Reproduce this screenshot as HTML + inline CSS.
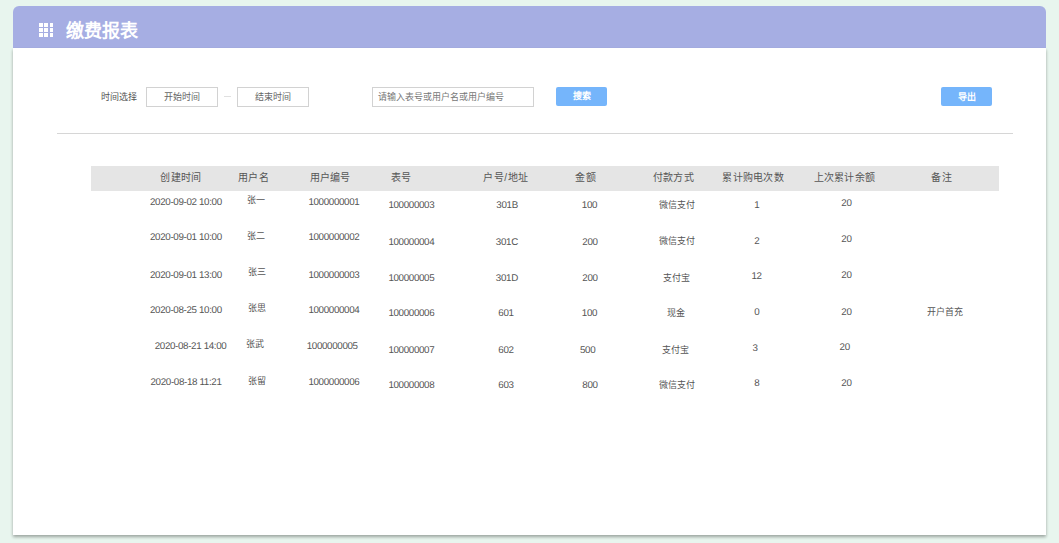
<!DOCTYPE html><html lang="zh-CN"><head><meta charset="utf-8"><style>
html,body{margin:0;padding:0;}
body{width:1059px;height:543px;position:relative;overflow:hidden;background:#e8f5ee;font-family:"Liberation Sans", sans-serif;}
.t{position:absolute;white-space:nowrap;line-height:1;}
.hd{position:absolute;left:13px;top:6px;width:1033px;height:42px;background:#a6aee3;border-radius:6px 6px 0 0;}
.bd{position:absolute;left:13px;top:48px;width:1033px;height:487px;background:#fff;box-shadow:0 2px 3px rgba(0,0,0,0.33);}
.grid{position:absolute;left:0;top:0;}
.grid i{position:absolute;width:3.6px;height:3.6px;background:#fff;}
.ib{position:absolute;box-sizing:border-box;border:1px solid #d2d2d2;background:#fff;height:20px;top:87px;}
.btn{position:absolute;top:87px;height:19px;background:#75b5fb;border-radius:2px;}
.dash{position:absolute;left:224px;top:96px;width:7px;height:1px;background:#e0e0e0;}
.line{position:absolute;left:57px;top:133px;width:956px;height:1px;background:#d6d6d6;}
.th{position:absolute;left:91px;top:166px;width:908px;height:25px;background:#e5e5e5;}
</style></head><body><div class="hd"></div><div class="bd"></div>
<div class="grid"><i style="left:39px;top:23px"></i><i style="left:44.2px;top:23px"></i><i style="left:49.5px;top:23px"></i><i style="left:39px;top:28.1px"></i><i style="left:44.2px;top:28.1px"></i><i style="left:49.5px;top:28.1px"></i><i style="left:39px;top:33.2px"></i><i style="left:44.2px;top:33.2px"></i><i style="left:49.5px;top:33.2px"></i></div>
<div class="ib" style="left:146px;width:72px"></div>
<div class="dash"></div>
<div class="ib" style="left:237px;width:72px"></div>
<div class="ib" style="left:372px;width:162px"></div>
<div class="btn" style="left:556px;width:51px"></div>
<div class="btn" style="left:941px;width:51px"></div>
<div class="line"></div>
<div class="th"></div>

<span class="t" style="left:65.50px;top:22.30px;font-size:18px;font-weight:700;color:#ffffff;">缴费报表</span>
<span class="t" style="left:101.12px;top:92.85px;font-size:9px;font-weight:400;color:#555;">时间选择</span>
<span class="t" style="left:164.45px;top:92.85px;font-size:9px;font-weight:400;color:#666;">开始时间</span>
<span class="t" style="left:255.20px;top:92.85px;font-size:9px;font-weight:400;color:#666;">结束时间</span>
<span class="t" style="left:378.20px;top:92.60px;font-size:9px;font-weight:400;color:#777;">请输入表号或用户名或用户编号</span>
<span class="t" style="left:573.00px;top:91.75px;font-size:9px;font-weight:700;color:#ffffff;">搜索</span>
<span class="t" style="left:958.25px;top:92.50px;font-size:9px;font-weight:700;color:#ffffff;">导出</span>
<span class="t" style="left:160.45px;top:173.10px;font-size:10px;font-weight:400;color:#555555;letter-spacing:0.25px;">创建时间</span>
<span class="t" style="left:238.00px;top:173.10px;font-size:10px;font-weight:400;color:#555555;letter-spacing:0.25px;">用户名</span>
<span class="t" style="left:309.55px;top:173.10px;font-size:10px;font-weight:400;color:#555555;letter-spacing:0.25px;">用户编号</span>
<span class="t" style="left:390.50px;top:173.10px;font-size:10px;font-weight:400;color:#555555;letter-spacing:0.25px;">表号</span>
<span class="t" style="left:483.00px;top:173.10px;font-size:10px;font-weight:400;color:#555555;letter-spacing:0.6px;">户号/地址</span>
<span class="t" style="left:575.45px;top:173.10px;font-size:10px;font-weight:400;color:#555555;letter-spacing:0.25px;">金额</span>
<span class="t" style="left:652.80px;top:173.10px;font-size:10px;font-weight:400;color:#555555;letter-spacing:0.25px;">付款方式</span>
<span class="t" style="left:722.25px;top:173.10px;font-size:10px;font-weight:400;color:#555555;letter-spacing:0.25px;">累计购电次数</span>
<span class="t" style="left:813.70px;top:173.10px;font-size:10px;font-weight:400;color:#555555;letter-spacing:0.25px;">上次累计余额</span>
<span class="t" style="left:931.45px;top:173.10px;font-size:10px;font-weight:400;color:#555555;letter-spacing:0.25px;">备注</span>
<span class="t" style="left:150.00px;top:197.90px;font-size:9.8px;font-weight:400;color:#555555;letter-spacing:-0.35px;text-rendering:geometricPrecision;">2020-09-02 10:00</span>
<span class="t" style="left:247.20px;top:196.45px;font-size:9px;font-weight:400;color:#555555;">张一</span>
<span class="t" style="left:308.40px;top:197.90px;font-size:9.8px;font-weight:400;color:#555555;letter-spacing:-0.35px;text-rendering:geometricPrecision;">1000000001</span>
<span class="t" style="left:388.40px;top:201.30px;font-size:9.8px;font-weight:400;color:#555555;letter-spacing:-0.35px;text-rendering:geometricPrecision;">100000003</span>
<span class="t" style="left:496.35px;top:201.30px;font-size:9.8px;font-weight:400;color:#555555;letter-spacing:-0.35px;text-rendering:geometricPrecision;">301B</span>
<span class="t" style="left:581.80px;top:201.30px;font-size:9.8px;font-weight:400;color:#555555;letter-spacing:-0.35px;text-rendering:geometricPrecision;">100</span>
<span class="t" style="left:658.90px;top:200.85px;font-size:9px;font-weight:400;color:#555555;">微信支付</span>
<span class="t" style="left:754.20px;top:200.75px;font-size:9.8px;font-weight:400;color:#555555;letter-spacing:-0.35px;text-rendering:geometricPrecision;">1</span>
<span class="t" style="left:841.30px;top:198.95px;font-size:9.8px;font-weight:400;color:#555555;letter-spacing:-0.35px;text-rendering:geometricPrecision;">20</span>
<span class="t" style="left:150.00px;top:232.90px;font-size:9.8px;font-weight:400;color:#555555;letter-spacing:-0.35px;text-rendering:geometricPrecision;">2020-09-01 10:00</span>
<span class="t" style="left:247.20px;top:231.85px;font-size:9px;font-weight:400;color:#555555;">张二</span>
<span class="t" style="left:308.40px;top:232.90px;font-size:9.8px;font-weight:400;color:#555555;letter-spacing:-0.35px;text-rendering:geometricPrecision;">1000000002</span>
<span class="t" style="left:388.40px;top:237.90px;font-size:9.8px;font-weight:400;color:#555555;letter-spacing:-0.35px;text-rendering:geometricPrecision;">100000004</span>
<span class="t" style="left:495.85px;top:237.90px;font-size:9.8px;font-weight:400;color:#555555;letter-spacing:-0.35px;text-rendering:geometricPrecision;">301C</span>
<span class="t" style="left:582.30px;top:237.90px;font-size:9.8px;font-weight:400;color:#555555;letter-spacing:-0.35px;text-rendering:geometricPrecision;">200</span>
<span class="t" style="left:658.90px;top:236.85px;font-size:9px;font-weight:400;color:#555555;">微信支付</span>
<span class="t" style="left:754.20px;top:236.95px;font-size:9.8px;font-weight:400;color:#555555;letter-spacing:-0.35px;text-rendering:geometricPrecision;">2</span>
<span class="t" style="left:841.30px;top:234.95px;font-size:9.8px;font-weight:400;color:#555555;letter-spacing:-0.35px;text-rendering:geometricPrecision;">20</span>
<span class="t" style="left:150.00px;top:270.50px;font-size:9.8px;font-weight:400;color:#555555;letter-spacing:-0.35px;text-rendering:geometricPrecision;">2020-09-01 13:00</span>
<span class="t" style="left:247.70px;top:268.45px;font-size:9px;font-weight:400;color:#555555;">张三</span>
<span class="t" style="left:308.40px;top:270.50px;font-size:9.8px;font-weight:400;color:#555555;letter-spacing:-0.35px;text-rendering:geometricPrecision;">1000000003</span>
<span class="t" style="left:388.40px;top:274.30px;font-size:9.8px;font-weight:400;color:#555555;letter-spacing:-0.35px;text-rendering:geometricPrecision;">100000005</span>
<span class="t" style="left:495.85px;top:274.30px;font-size:9.8px;font-weight:400;color:#555555;letter-spacing:-0.35px;text-rendering:geometricPrecision;">301D</span>
<span class="t" style="left:582.30px;top:274.30px;font-size:9.8px;font-weight:400;color:#555555;letter-spacing:-0.35px;text-rendering:geometricPrecision;">200</span>
<span class="t" style="left:663.40px;top:274.05px;font-size:9px;font-weight:400;color:#555555;">支付宝</span>
<span class="t" style="left:751.40px;top:271.95px;font-size:9.8px;font-weight:400;color:#555555;letter-spacing:-0.35px;text-rendering:geometricPrecision;">12</span>
<span class="t" style="left:841.30px;top:270.55px;font-size:9.8px;font-weight:400;color:#555555;letter-spacing:-0.35px;text-rendering:geometricPrecision;">20</span>
<span class="t" style="left:150.00px;top:305.70px;font-size:9.8px;font-weight:400;color:#555555;letter-spacing:-0.35px;text-rendering:geometricPrecision;">2020-08-25 10:00</span>
<span class="t" style="left:247.70px;top:304.25px;font-size:9px;font-weight:400;color:#555555;">张思</span>
<span class="t" style="left:308.40px;top:305.70px;font-size:9.8px;font-weight:400;color:#555555;letter-spacing:-0.35px;text-rendering:geometricPrecision;">1000000004</span>
<span class="t" style="left:388.40px;top:309.30px;font-size:9.8px;font-weight:400;color:#555555;letter-spacing:-0.35px;text-rendering:geometricPrecision;">100000006</span>
<span class="t" style="left:498.30px;top:309.30px;font-size:9.8px;font-weight:400;color:#555555;letter-spacing:-0.35px;text-rendering:geometricPrecision;">601</span>
<span class="t" style="left:581.80px;top:309.30px;font-size:9.8px;font-weight:400;color:#555555;letter-spacing:-0.35px;text-rendering:geometricPrecision;">100</span>
<span class="t" style="left:667.15px;top:309.05px;font-size:9px;font-weight:400;color:#555555;">现金</span>
<span class="t" style="left:754.20px;top:308.15px;font-size:9.8px;font-weight:400;color:#555555;letter-spacing:-0.35px;text-rendering:geometricPrecision;">0</span>
<span class="t" style="left:841.30px;top:307.55px;font-size:9.8px;font-weight:400;color:#555555;letter-spacing:-0.35px;text-rendering:geometricPrecision;">20</span>
<span class="t" style="left:154.70px;top:341.70px;font-size:9.8px;font-weight:400;color:#555555;letter-spacing:-0.35px;text-rendering:geometricPrecision;">2020-08-21 14:00</span>
<span class="t" style="left:246.20px;top:340.25px;font-size:9px;font-weight:400;color:#555555;">张武</span>
<span class="t" style="left:306.70px;top:341.70px;font-size:9.8px;font-weight:400;color:#555555;letter-spacing:-0.35px;text-rendering:geometricPrecision;">1000000005</span>
<span class="t" style="left:388.40px;top:345.50px;font-size:9.8px;font-weight:400;color:#555555;letter-spacing:-0.35px;text-rendering:geometricPrecision;">100000007</span>
<span class="t" style="left:498.30px;top:345.50px;font-size:9.8px;font-weight:400;color:#555555;letter-spacing:-0.35px;text-rendering:geometricPrecision;">602</span>
<span class="t" style="left:580.00px;top:345.50px;font-size:9.8px;font-weight:400;color:#555555;letter-spacing:-0.35px;text-rendering:geometricPrecision;">500</span>
<span class="t" style="left:662.20px;top:345.65px;font-size:9px;font-weight:400;color:#555555;">支付宝</span>
<span class="t" style="left:752.60px;top:344.35px;font-size:9.8px;font-weight:400;color:#555555;letter-spacing:-0.35px;text-rendering:geometricPrecision;">3</span>
<span class="t" style="left:839.60px;top:342.75px;font-size:9.8px;font-weight:400;color:#555555;letter-spacing:-0.35px;text-rendering:geometricPrecision;">20</span>
<span class="t" style="left:150.50px;top:377.70px;font-size:9.8px;font-weight:400;color:#555555;letter-spacing:-0.35px;text-rendering:geometricPrecision;">2020-08-18 11:21</span>
<span class="t" style="left:247.70px;top:376.85px;font-size:9px;font-weight:400;color:#555555;">张留</span>
<span class="t" style="left:308.40px;top:377.70px;font-size:9.8px;font-weight:400;color:#555555;letter-spacing:-0.35px;text-rendering:geometricPrecision;">1000000006</span>
<span class="t" style="left:388.40px;top:380.50px;font-size:9.8px;font-weight:400;color:#555555;letter-spacing:-0.35px;text-rendering:geometricPrecision;">100000008</span>
<span class="t" style="left:498.30px;top:380.50px;font-size:9.8px;font-weight:400;color:#555555;letter-spacing:-0.35px;text-rendering:geometricPrecision;">603</span>
<span class="t" style="left:582.30px;top:380.50px;font-size:9.8px;font-weight:400;color:#555555;letter-spacing:-0.35px;text-rendering:geometricPrecision;">800</span>
<span class="t" style="left:658.90px;top:380.65px;font-size:9px;font-weight:400;color:#555555;">微信支付</span>
<span class="t" style="left:754.20px;top:379.35px;font-size:9.8px;font-weight:400;color:#555555;letter-spacing:-0.35px;text-rendering:geometricPrecision;">8</span>
<span class="t" style="left:841.30px;top:379.15px;font-size:9.8px;font-weight:400;color:#555555;letter-spacing:-0.35px;text-rendering:geometricPrecision;">20</span>
<span class="t" style="left:927.40px;top:307.90px;font-size:9px;font-weight:400;color:#555555;">开户首充</span></body></html>
